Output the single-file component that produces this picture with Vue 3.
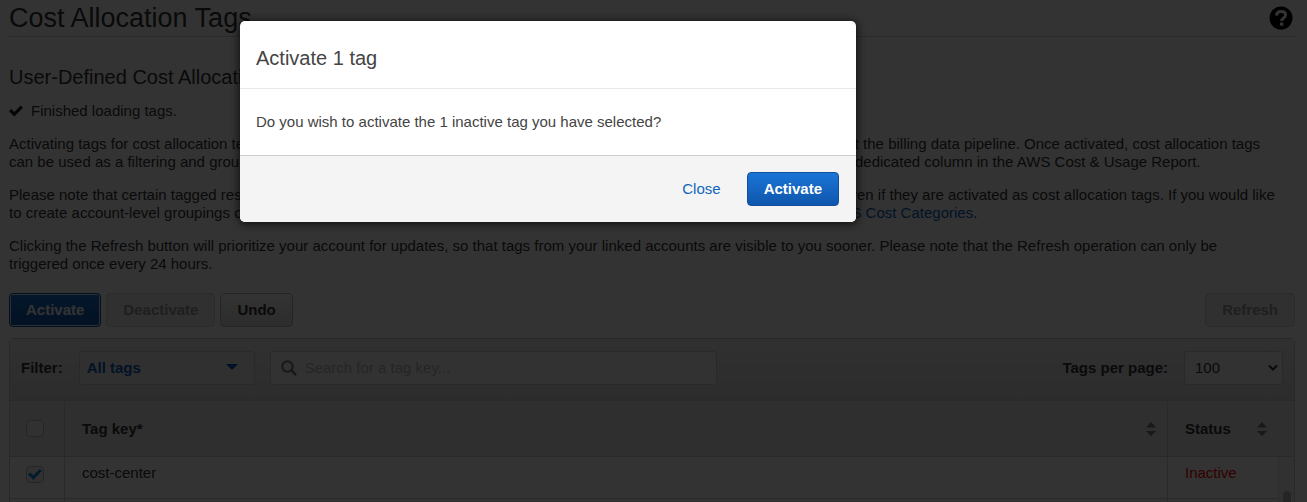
<script setup>
import { ref } from 'vue'

const filter = ref('All tags')
const perPage = ref('100')
const search = ref('')
const allChecked = ref(false)
const rows = ref([
  { key: 'cost-center', status: 'Inactive', checked: true },
])
</script>

<template>
  <div class="page">
    <main class="content">
      <header class="title-bar">
        <h1>Cost Allocation Tags</h1>
        <button class="help" type="button" aria-label="Help">
          <svg viewBox="0 0 24 24" width="24" height="24" aria-hidden="true">
            <circle cx="12" cy="12" r="11.5" fill="#000" />
            <path d="M7.500 9.600C7.800 6.800 9.600 5.500 12.100 5.500c2.600 0 4.500 1.300 4.500 3.600 0 2.900-4 2.900-4 6" fill="none" stroke="#fff" stroke-width="3" />
            <rect x="11" y="16.500" width="3.400" height="3.200" fill="#fff" />
          </svg>
        </button>
      </header>

      <h2>User-Defined Cost Allocation Tags</h2>
      <p class="loaded">
        <svg viewBox="0 0 14 12" width="14" height="12" aria-hidden="true">
          <path d="M0 6.200L2.200 4l3.100 3L11.700 0.600 14 2.800 5.300 11.500z" fill="#222" />
        </svg>
        Finished loading tags.
      </p>

      <p>
        Activating tags for cost allocation tells AWS that the corresponding cost data for these tags should be made available throughout the billing data pipeline. Once activated, cost allocation tags<br />
        can be used as a filtering and grouping dimension in AWS Cost Explorer, as a filter for saved reports in AWS Budgets, and as a dedicated column in the AWS Cost &amp; Usage Report.
      </p>
      <p>
        Please note that certain tagged resources and account-level tags may not be available for cost allocation reporting purposes, even if they are activated as cost allocation tags. If you would like<br />
        to create account-level groupings of your cost and usage information across your linked accounts, you can do that by using <a href="#categories">AWS Cost Categories</a>.
      </p>
      <p>
        Clicking the Refresh button will prioritize your account for updates, so that tags from your linked accounts are visible to you sooner. Please note that the Refresh operation can only be<br />
        triggered once every 24 hours.
      </p>

      <div class="actions">
        <button class="btn primary focused" type="button">Activate</button>
        <button class="btn" type="button" disabled>Deactivate</button>
        <button class="btn" type="button">Undo</button>
        <button class="btn refresh" type="button" disabled>Refresh</button>
      </div>

      <section class="panel">
        <div class="filters">
          <label for="filter">Filter:</label>
          <div class="select filter-select">
            <select id="filter" v-model="filter">
              <option>All tags</option>
            </select>
            <svg viewBox="0 0 12 6" width="12" height="6" aria-hidden="true"><path d="M0 0h12L6 6z" fill="#0d5bbd" /></svg>
          </div>
          <div class="search">
            <svg viewBox="0 0 16 16" width="16" height="16" aria-hidden="true">
              <circle cx="6.500" cy="6.500" r="5.200" fill="none" stroke="#777" stroke-width="2" />
              <path d="M10.500 10.500l4.500 4.500" stroke="#777" stroke-width="2.500" />
            </svg>
            <input v-model="search" type="text" placeholder="Search for a tag key..." aria-label="Search for a tag key" />
          </div>
          <label class="per-page" for="per-page">Tags per page:</label>
          <div class="select page-select">
            <select id="per-page" v-model="perPage">
              <option>100</option>
            </select>
            <svg viewBox="0 0 10 8" width="10" height="8" aria-hidden="true"><path d="M1 1.500l4 4 4-4" fill="none" stroke="#333" stroke-width="2" /></svg>
          </div>
        </div>

        <div class="table-wrap">
          <table>
            <thead>
              <tr>
                <th class="check"><input v-model="allChecked" type="checkbox" aria-label="Select all tags" /></th>
                <th>
                  <div class="head">
                    Tag key*
                    <button class="sort" type="button" aria-label="Sort by tag key">
                      <svg viewBox="0 0 12 14" width="12" height="14" aria-hidden="true"><path d="M1 5.500h10L6 0zM1 9h10l-5 5z" fill="#777" /></svg>
                    </button>
                  </div>
                </th>
                <th class="status">
                  <div class="head">
                    Status
                    <button class="sort" type="button" aria-label="Sort by status">
                      <svg viewBox="0 0 12 14" width="12" height="14" aria-hidden="true"><path d="M1 5.500h10L6 0zM1 9h10l-5 5z" fill="#777" /></svg>
                    </button>
                  </div>
                </th>
              </tr>
            </thead>
            <tbody>
              <tr v-for="row in rows" :key="row.key">
                <td class="check"><input v-model="row.checked" type="checkbox" :aria-label="'Select ' + row.key" /></td>
                <td>{{ row.key }}</td>
                <td class="inactive">{{ row.status }}</td>
              </tr>
              <tr>
                <td class="check"></td>
                <td></td>
                <td></td>
              </tr>
            </tbody>
          </table>
          <div class="scrollbar"><div class="thumb"></div></div>
        </div>
      </section>
    </main>

    <div class="backdrop">
      <div class="modal" role="dialog" aria-modal="true" aria-labelledby="modal-title">
        <h3 id="modal-title">Activate 1 tag</h3>
        <div class="modal-body">Do you wish to activate the 1 inactive tag you have selected?</div>
        <footer>
          <button class="close" type="button">Close</button>
          <button class="btn primary" type="button">Activate</button>
        </footer>
      </div>
    </div>
  </div>
</template>

<style>
body {
  margin: 0;
}
</style>

<style scoped>
.page {
  position: relative;
  height: 100vh;
  overflow: hidden;
  background: #fff;
  color: #444;
  font-family: "Liberation Sans", Arial, sans-serif;
  font-size: 15px;
  line-height: 18px;
}
* {
  box-sizing: border-box;
}
button,
input,
select {
  font: inherit;
  color: inherit;
  margin: 0;
}
svg {
  display: block;
}
.content {
  padding: 0 12px 0 9px;
  color: #333;
}
.title-bar {
  display: flex;
  align-items: center;
  justify-content: space-between;
  height: 37px;
  border-bottom: 1px solid #d5d5d5;
}
h1,
h2,
h3 {
  margin: 0;
  font-weight: 400;
}
h1 {
  font-size: 27px;
  line-height: 36px;
}
.help {
  padding: 0;
  margin-right: 2px;
  border: 0;
  background: none;
}
h2 {
  margin-top: 28px;
  font-size: 20px;
  line-height: 24px;
}
p {
  margin: 0 0 15px;
  white-space: nowrap;
}
.loaded {
  display: flex;
  align-items: center;
  gap: 8px;
  margin-top: 13px;
}
a {
  color: #0b61c0;
  text-decoration: none;
}
.actions {
  display: flex;
  gap: 5px;
  margin-top: 20px;
}
.btn {
  height: 34px;
  padding: 0 16px;
  border: 1px solid #bbb;
  border-radius: 4px;
  background: linear-gradient(#fff, #ddd);
  font-weight: 700;
}
.btn:disabled {
  background: #f0f0f0;
  border-color: #d5d5d5;
  color: #999;
}
.primary,
.primary.focused {
  border-color: #0f4f9e;
  background: linear-gradient(#1a74d6, #0f56ac);
  color: #fff;
}
.focused {
  box-shadow: inset 0 0 0 1px #d5e4f8;
}
.refresh {
  margin-left: auto;
}
.panel {
  margin-top: 11px;
  border: 1px solid #ccc;
  border-radius: 3px 3px 0 0;
}
.filters {
  display: flex;
  align-items: center;
  padding: 12px 11px 15px;
  background: linear-gradient(#f0f0f0, #dcdcdc);
}
.filters label {
  font-weight: 700;
}
.select {
  position: relative;
}
.select select {
  width: 100%;
  height: 34px;
  border: 1px solid #ccc;
  border-radius: 3px;
  appearance: none;
  background: #f8f8f8;
}
.select svg {
  position: absolute;
  right: 17px;
  top: 13px;
  pointer-events: none;
}
.filter-select {
  width: 176px;
  margin: 0 15px 0 16px;
}
.filter-select select {
  padding: 0 7px;
  background: #eee;
  color: #0d5bbd;
  font-weight: 700;
}
.search {
  display: flex;
  align-items: center;
  gap: 8px;
  width: 447px;
  height: 34px;
  padding: 0 10px;
  border: 1px solid #ccc;
  border-radius: 3px;
  background: #f8f8f8;
}
.search input {
  flex: 1;
  padding: 0;
  border: 0;
  background: none;
}
.search input::placeholder {
  color: #bbb;
}
.per-page {
  margin-left: auto;
}
.page-select {
  width: 99px;
  margin-left: 16px;
}
.page-select select {
  padding: 0 10px;
}
.page-select svg {
  right: 5px;
}
.table-wrap {
  position: relative;
}
table {
  width: 100%;
  border-collapse: separate;
  border-spacing: 0;
  table-layout: fixed;
}
th,
td {
  padding: 0 17px;
  border-top: 1px solid #ccc;
  border-left: 1px solid #ccc;
  text-align: left;
}
th:first-child,
td:first-child {
  border-left: 0;
}
th {
  height: 56px;
  background: #ebebeb;
}
td {
  height: 42px;
  padding-bottom: 10px;
}
.check {
  width: 54px;
  padding: 0 16px;
}
td.check {
  padding-bottom: 6px;
}
.status {
  width: 127px;
}
.head {
  display: flex;
  align-items: center;
  justify-content: space-between;
}
.sort {
  padding: 0;
  border: 0;
  background: none;
  margin-right: -7px;
}
.status .sort {
  margin-right: 9px;
}
.inactive {
  color: #f00;
}
input[type="checkbox"] {
  display: block;
  width: 18px;
  height: 17px;
  border: 1px solid #bbb;
  border-radius: 4px;
  appearance: none;
  background: #f5f5f5;
}
td input[type="checkbox"]:checked::after {
  content: "";
  display: block;
  width: 14px;
  height: 11px;
  margin: 2px 1px;
  background: #0a8bd8;
  clip-path: polygon(0 50%, 16% 32%, 37% 57%, 84% 0, 100% 17%, 38% 100%);
}
.scrollbar {
  position: absolute;
  top: 57px;
  right: 0;
  bottom: 0;
  width: 16px;
  padding: 34px 3px 0 4px;
  border-left: 1px solid #e0e0e0;
  background: #f5f5f5;
}
.thumb {
  width: 8px;
  height: 40px;
  border-radius: 4px;
  background: #bbb;
}
.backdrop {
  position: absolute;
  inset: 0;
  display: flex;
  align-items: flex-start;
  padding: 21px 0 0 240px;
  background: rgba(0, 0, 0, 0.8);
}
.modal {
  width: 616px;
  overflow: hidden;
  border-radius: 5px;
  background: #fff;
  box-shadow: 0 1px 8px 1px rgba(0, 0, 0, 0.7);
}
h3 {
  padding: 25px 16px 18px;
  border-bottom: 1px solid #eaeaea;
  font-size: 20px;
  line-height: 24px;
}
.modal-body {
  padding: 24px 16px;
}
footer {
  display: flex;
  align-items: center;
  justify-content: flex-end;
  gap: 26px;
  height: 67px;
  padding: 0 17px 1px;
  border-top: 1px solid #ccc;
  background: #f4f4f4;
}
.close {
  padding: 0;
  border: 0;
  background: none;
  color: #1166bb;
}
</style>
